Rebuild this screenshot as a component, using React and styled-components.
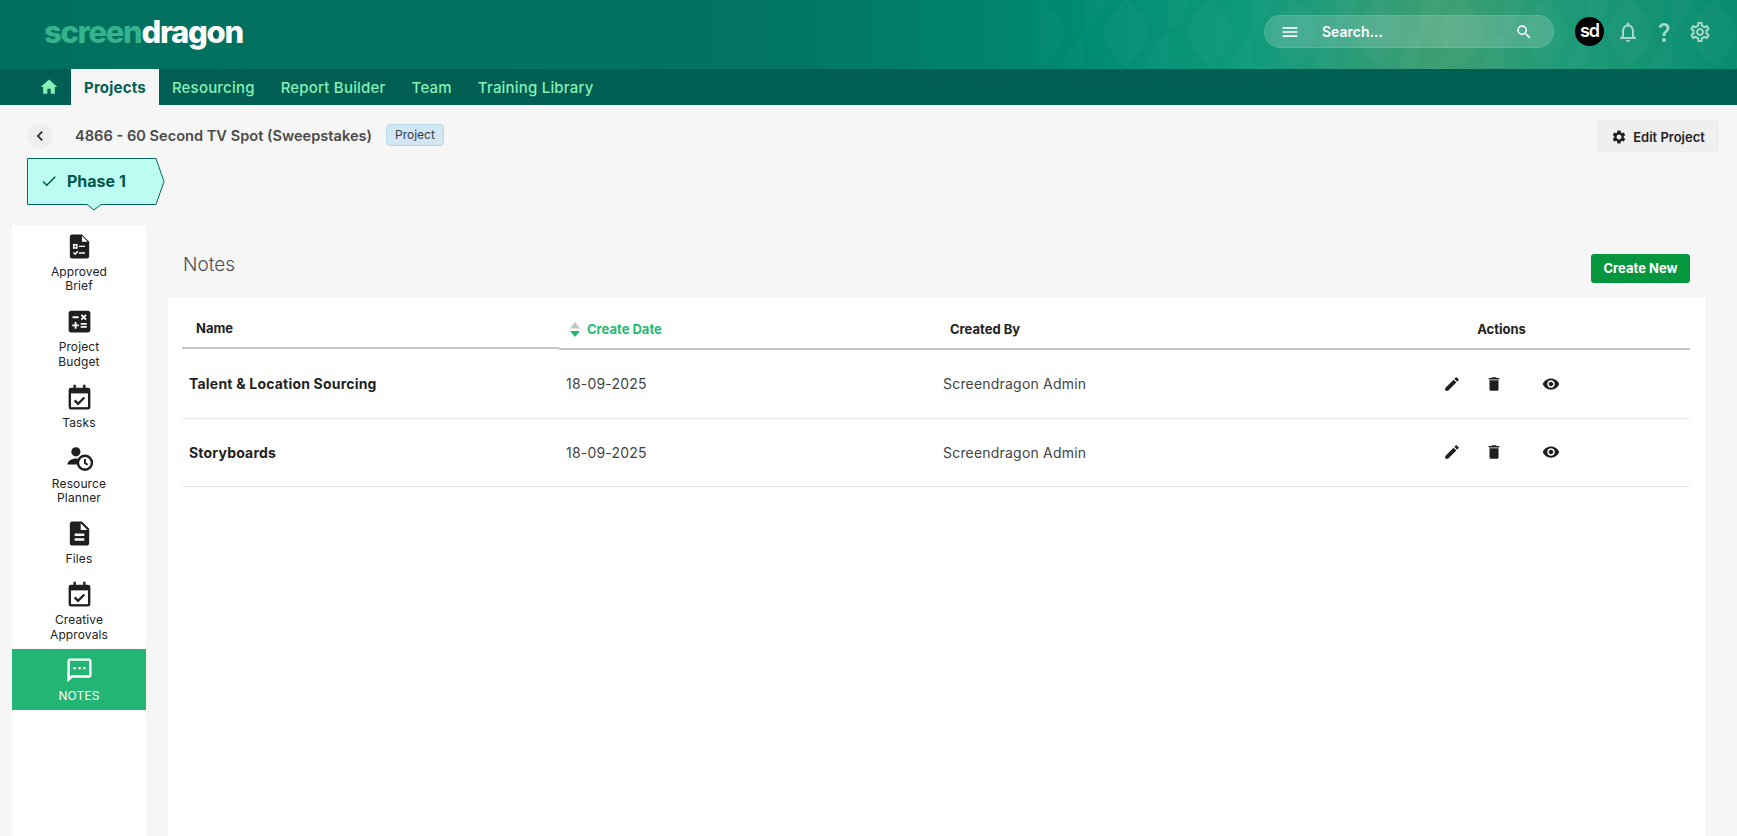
import React from "react";
import styled, { createGlobalStyle } from "styled-components";
import {
  MdCalculate,
  MdCheck,
  MdChevronLeft,
  MdDelete,
  MdDescription,
  MdEdit,
  MdHome,
  MdMenu,
  MdOutlineNotifications,
  MdOutlineSettings,
  MdOutlineSms,
  MdQuestionMark,
  MdSearch,
  MdSettings,
  MdVisibility,
} from "react-icons/md";

const GlobalStyle = createGlobalStyle`
  html, body {
    margin: 0;
    padding: 0;
    background: #f6f6f6;
    font-family: Inter, "Liberation Sans", sans-serif;
    color: #222;
  }
  * { box-sizing: border-box; }
`;

const Page = styled.div`
  height: 100vh;
  overflow: hidden;
  display: flex;
  flex-direction: column;
`;

const Header = styled.header`
  position: relative;
  flex: 0 0 69px;
  display: flex;
  align-items: center;
  padding: 0 25px 0 44px;
  background: linear-gradient(
    90deg,
    #00705e 0%,
    #007562 45%,
    #008a72 62%,
    #0f9a7c 72%,
    #2a9c78 78%,
    #3f9e72 83%,
    #1f9a78 90%,
    #088c70 100%
  );
`;

const Pattern = styled.svg`
  position: absolute;
  inset: 0;
  width: 100%;
  height: 100%;
`;

const Logo = styled.div`
  position: relative;
  z-index: 1;
  font-size: 31px;
  font-weight: 800;
  letter-spacing: -1.3px;
  line-height: 40px;
  color: #fff;
  margin-top: -5px;
`;

const LogoLight = styled.span`
  color: #35b38c;
`;

const LogoEye = styled.span`
  position: absolute;
  left: 169px;
  top: 20px;
  width: 4px;
  height: 5px;
  border-radius: 50%;
  background: #14594f;
`;

const HeaderRight = styled.div`
  position: relative;
  z-index: 1;
  margin-left: auto;
  margin-top: -6px;
  display: flex;
  align-items: center;
  gap: 12px;
`;

const SearchPill = styled.div`
  width: 290px;
  height: 33px;
  margin-right: 9px;
  display: flex;
  align-items: center;
  padding: 0 20px 0 15px;
  border-radius: 17px;
  background: rgba(255, 255, 255, 0.17);
  border: 1px solid rgba(255, 255, 255, 0.1);
  color: #fff;
  font-size: 14px;
  font-weight: 600;
`;

const SearchText = styled.span`
  margin-left: 22px;
  flex: 1;
`;

const Avatar = styled.div`
  width: 29px;
  height: 29px;
  border-radius: 50%;
  background: #000;
  color: #fff;
  display: flex;
  align-items: center;
  justify-content: center;
  font-size: 18px;
  font-weight: 600;
  letter-spacing: -1px;
  padding-bottom: 2px;
`;

const HeaderIcon = styled.span`
  width: 24px;
  height: 24px;
  display: flex;
  color: #a5d8c8;
  font-size: 24px;
`;

const Nav = styled.nav`
  flex: 0 0 36px;
  display: flex;
  align-items: stretch;
  background: #005f52;
  padding-left: 39px;
`;

const HomeLink = styled.a`
  width: 32px;
  padding-right: 12px;
  display: flex;
  align-items: center;
  font-size: 20px;
  color: #86f0b8;
`;

const NavItem = styled.a`
  display: flex;
  align-items: center;
  padding: 0 13px;
  font-size: 15px;
  letter-spacing: 0.2px;
  font-weight: ${({ $active }) => ($active ? 700 : 500)};
  color: ${({ $active }) => ($active ? "#005f52" : "#86f0b8")};
  background: ${({ $active }) => ($active ? "#f6f6f6" : "transparent")};
`;

const TopBar = styled.div`
  flex: 0 0 53px;
  display: flex;
  align-items: flex-start;
  padding: 14px 18px 0 27px;
`;

const BackButton = styled.button`
  width: 26px;
  height: 26px;
  margin-top: 4px;
  padding: 0;
  border: 0;
  border-radius: 50%;
  background: #eeeeee;
  display: flex;
  align-items: center;
  justify-content: center;
  font-size: 20px;
  color: #222;
`;

const Title = styled.h1`
  margin: 4px 0 0 22px;
  font-size: 14.6px;
  line-height: 26px;
  font-weight: 600;
  color: #4a4a4a;
`;

const Badge = styled.span`
  margin: 5px 0 0 14px;
  height: 22px;
  padding: 0 8px 1px;
  display: flex;
  align-items: center;
  font-size: 12px;
  color: #33404c;
  background: #d3e6f3;
  border: 1px solid #b9d8ec;
  border-radius: 4px;
`;

const EditButton = styled.button`
  margin-left: auto;
  margin-top: 1px;
  width: 122px;
  height: 32px;
  padding: 2px 0 0;
  display: flex;
  align-items: center;
  justify-content: center;
  gap: 6px;
  font-family: inherit;
  font-size: 13px;
  font-weight: 600;
  color: #1f1f1f;
  background: #efefef;
  border: 1px solid #ececec;
  border-radius: 3px;
  svg { font-size: 16px; }
`;

const PhaseRow = styled.div`
  flex: 0 0 67px;
  padding-left: 27px;
`;

const PhaseTab = styled.div`
  position: relative;
  isolation: isolate;
  width: 138px;
  height: 47px;
  display: flex;
  align-items: center;
  padding: 0 0 1px 13px;
  gap: 9px;
  font-size: 16px;
  font-weight: 700;
  color: #00584c;
  svg { font-size: 18px; }
`;

const PhaseShape = styled.svg`
  position: absolute;
  left: 0;
  top: 0;
  z-index: -1;
`;

const Body = styled.div`
  flex: 1;
  min-height: 0;
  display: flex;
  padding-left: 12px;
`;

const Sidebar = styled.aside`
  flex: 0 0 134px;
  background: #fff;
`;

const SideItem = styled.a`
  display: flex;
  flex-direction: column;
  align-items: center;
  gap: 5.5px;
  padding: 8px 0 7px;
  font-size: 12px;
  letter-spacing: 0.12px;
  line-height: 14.5px;
  text-align: center;
  color: ${({ $active }) => ($active ? "#fff" : "#222")};
  background: ${({ $active }) => ($active ? "#22b573" : "transparent")};
`;

const SideIcon = styled.span`
  height: 26px;
  display: flex;
  align-items: center;
  justify-content: center;
  font-size: 29px;
  color: ${({ $active }) => ($active ? "#fff" : "#1f1f1f")};
`;

const Main = styled.main`
  width: 1537px;
  margin-left: 22px;
  display: flex;
  flex-direction: column;
`;

const MainHead = styled.div`
  flex: 0 0 72px;
  display: flex;
  align-items: flex-start;
  justify-content: space-between;
  padding: 28px 15px 0 15px;
`;

const MainTitle = styled.h2`
  margin: 0;
  font-size: 19px;
  line-height: 24px;
  font-weight: 300;
  color: #4f4f4f;
`;

const CreateButton = styled.button`
  width: 99px;
  height: 29px;
  margin-top: 1px;
  padding: 0 0 1px;
  border: 0;
  border-radius: 3px;
  background: #05963e;
  color: #fff;
  font-family: inherit;
  font-size: 13px;
  font-weight: 700;
`;

const Panel = styled.section`
  flex: 1;
  background: #fff;
  padding: 0 15px 0 14px;
`;

const HeadRow = styled.div`
  display: grid;
  grid-template-columns: repeat(4, 377px);
  height: 53px;
  align-items: end;
`;

const HeadCell = styled.div`
  display: flex;
  align-items: center;
  justify-content: ${({ $center }) => ($center ? "center" : "flex-start")};
  height: 36px;
  padding-left: ${({ $center, $sort }) => ($center ? 0 : $sort ? "10px" : "14px")};
  padding-bottom: 4px;
  margin-bottom: ${({ $raised }) => ($raised ? "1px" : 0)};
  border-bottom: 2px solid #c6c6c6;
  font-size: 13px;
  font-weight: 700;
  color: ${({ $sort }) => ($sort ? "#1fbb74" : "#222")};
`;

const SortMark = styled.svg`
  margin-right: 6px;
`;

const Row = styled.div`
  display: grid;
  grid-template-columns: repeat(4, 377px);
  height: 68.5px;
  align-items: center;
  border-bottom: 1px solid #e6e6e6;
  font-size: 14px;
  letter-spacing: 0.2px;
`;

const NameCell = styled.div`
  padding-left: 7px;
  font-weight: 700;
  color: #1f1f1f;
`;

const Cell = styled.div`
  padding-left: 7px;
  color: #444;
`;

const Actions = styled.div`
  display: flex;
  align-items: center;
  padding-left: 129px;
  font-size: 18px;
  color: #1f1f1f;
`;

const ActionIcon = styled.span`
  width: ${({ $w }) => $w}px;
  display: flex;
  padding-left: 1px;
`;

function BriefIcon() {
  return (
    <svg width="29" height="29" viewBox="0 0 24 24">
      <path
        fill="currentColor"
        d="M6 2h8l6 6v12a2 2 0 0 1-2 2H6a2 2 0 0 1-2-2V4a2 2 0 0 1 2-2z"
      />
      <path fill="#fff" d="M14 3.2 18.8 8H14z" />
      <path
        fill="none"
        stroke="#fff"
        strokeWidth="1.2"
        d="M7.2 10.6h2.6v2.6H7.2zM11.5 11.9h5M7 17l1.4 1.4L10.6 16M11.5 17.4h5"
      />
    </svg>
  );
}

function CalendarIcon() {
  return (
    <svg width="29" height="29" viewBox="0 0 24 24">
      <path
        fill="currentColor"
        d="M7 1.5h2V4h6V1.5h2V4h2a2 2 0 0 1 2 2v14a2 2 0 0 1-2 2H5a2 2 0 0 1-2-2V6a2 2 0 0 1 2-2h2z"
      />
      <path fill="#fff" d="M5 8.6h14V20H5z" />
      <path fill="none" stroke="currentColor" strokeWidth="1.9" d="M8 14.4l2.8 2.8L16 12" />
    </svg>
  );
}

function ResourceIcon() {
  return (
    <svg width="29" height="29" viewBox="0 0 24 24">
      <circle cx="9" cy="6.5" r="3.8" fill="currentColor" />
      <path fill="currentColor" d="M2 17c0-3.2 4-5 7-5 1.2 0 2.4.2 3.5.7A7 7 0 0 0 10.6 17z" />
      <circle cx="16.5" cy="15.5" r="5.8" fill="#fff" stroke="currentColor" strokeWidth="2" />
      <path fill="none" stroke="currentColor" strokeWidth="1.6" d="M16.5 12.5v3.3l2.2 1.4" />
    </svg>
  );
}

const sideItems = [
  { label: "Approved Brief", icon: <BriefIcon />, br: true },
  { label: "Project Budget", icon: <MdCalculate />, br: true },
  { label: "Tasks", icon: <CalendarIcon /> },
  { label: "Resource Planner", icon: <ResourceIcon />, br: true },
  { label: "Files", icon: <MdDescription /> },
  { label: "Creative Approvals", icon: <CalendarIcon />, br: true },
  { label: "NOTES", icon: <MdOutlineSms />, active: true },
];

const notes = ["Talent & Location Sourcing", "Storyboards"];

function SideLabel({ label, br }) {
  if (!br) return <span>{label}</span>;
  const [first, second] = label.split(" ");
  return (
    <span>
      {first}
      <br />
      {second}
    </span>
  );
}

export default function App() {
  return (
    <Page>
      <GlobalStyle />
      <Header>
        <Pattern aria-hidden="true">
          <defs>
            <pattern id="lens" width="84" height="70" patternUnits="userSpaceOnUse" x="1000" y="-2">
              <path fill="#fff" fillOpacity="0.025" d="M42 0C54 14 64 24 64 35S54 56 42 70C30 56 20 46 20 35S30 14 42 0z" />
              <path fill="#fff" fillOpacity="0.018" d="M0 -35C12 -21 22 -11 22 0S12 21 0 35C-12 21-22 11-22 0S-12-21 0-35z" />
              <path fill="#fff" fillOpacity="0.018" d="M84 35C96 49 106 59 106 70S96 91 84 105C72 91 62 81 62 70S72 49 84 35z" />
            </pattern>
          </defs>
          <rect x="1040" y="0" width="697" height="69" fill="url(#lens)" />
        </Pattern>
        <Logo>
          <LogoLight>screen</LogoLight>dragon
          <LogoEye />
        </Logo>
        <HeaderRight>
          <SearchPill>
            <MdMenu size={20} />
            <SearchText>Search...</SearchText>
            <MdSearch size={18} />
          </SearchPill>
          <Avatar>sd</Avatar>
          <HeaderIcon><MdOutlineNotifications /></HeaderIcon>
          <HeaderIcon><MdQuestionMark /></HeaderIcon>
          <HeaderIcon><MdOutlineSettings /></HeaderIcon>
        </HeaderRight>
      </Header>
      <Nav>
        <HomeLink><MdHome /></HomeLink>
        <NavItem $active>Projects</NavItem>
        <NavItem>Resourcing</NavItem>
        <NavItem>Report Builder</NavItem>
        <NavItem>Team</NavItem>
        <NavItem>Training Library</NavItem>
      </Nav>
      <TopBar>
        <BackButton><MdChevronLeft /></BackButton>
        <Title>4866 - 60 Second TV Spot (Sweepstakes)</Title>
        <Badge>Project</Badge>
        <EditButton><MdSettings />Edit Project</EditButton>
      </TopBar>
      <PhaseRow>
        <PhaseTab>
          <PhaseShape width="138" height="54" aria-hidden="true">
            <path
              fill="#bdfcf2"
              stroke="#00695c"
              strokeWidth="1"
              d="M.5.5H129L137 23.5 129 46.5H74L67 52 60 46.5H.5z"
            />
          </PhaseShape>
          <MdCheck />
          Phase 1
        </PhaseTab>
      </PhaseRow>
      <Body>
        <Sidebar>
          {sideItems.map((item) => (
            <SideItem key={item.label} $active={item.active}>
              <SideIcon $active={item.active}>{item.icon}</SideIcon>
              <SideLabel label={item.label} br={item.br} />
            </SideItem>
          ))}
        </Sidebar>
        <Main>
          <MainHead>
            <MainTitle>Notes</MainTitle>
            <CreateButton>Create New</CreateButton>
          </MainHead>
          <Panel>
            <HeadRow>
              <HeadCell $raised>Name</HeadCell>
              <HeadCell $sort>
                <SortMark width="12" height="15" viewBox="0 0 12 15">
                  <path fill="#c4c4c4" d="M6 0l5 6.5H1z" />
                  <path fill="#1fbb74" d="M1 9h10l-5 6z" />
                </SortMark>
                Create Date
              </HeadCell>
              <HeadCell>Created By</HeadCell>
              <HeadCell $center>Actions</HeadCell>
            </HeadRow>
            {notes.map((name) => (
              <Row key={name}>
                <NameCell>{name}</NameCell>
                <Cell>18-09-2025</Cell>
                <Cell>Screendragon Admin</Cell>
                <Actions>
                  <ActionIcon $w={42}><MdEdit /></ActionIcon>
                  <ActionIcon $w={57}><MdDelete /></ActionIcon>
                  <ActionIcon $w={20}><MdVisibility /></ActionIcon>
                </Actions>
              </Row>
            ))}
          </Panel>
        </Main>
      </Body>
    </Page>
  );
}
